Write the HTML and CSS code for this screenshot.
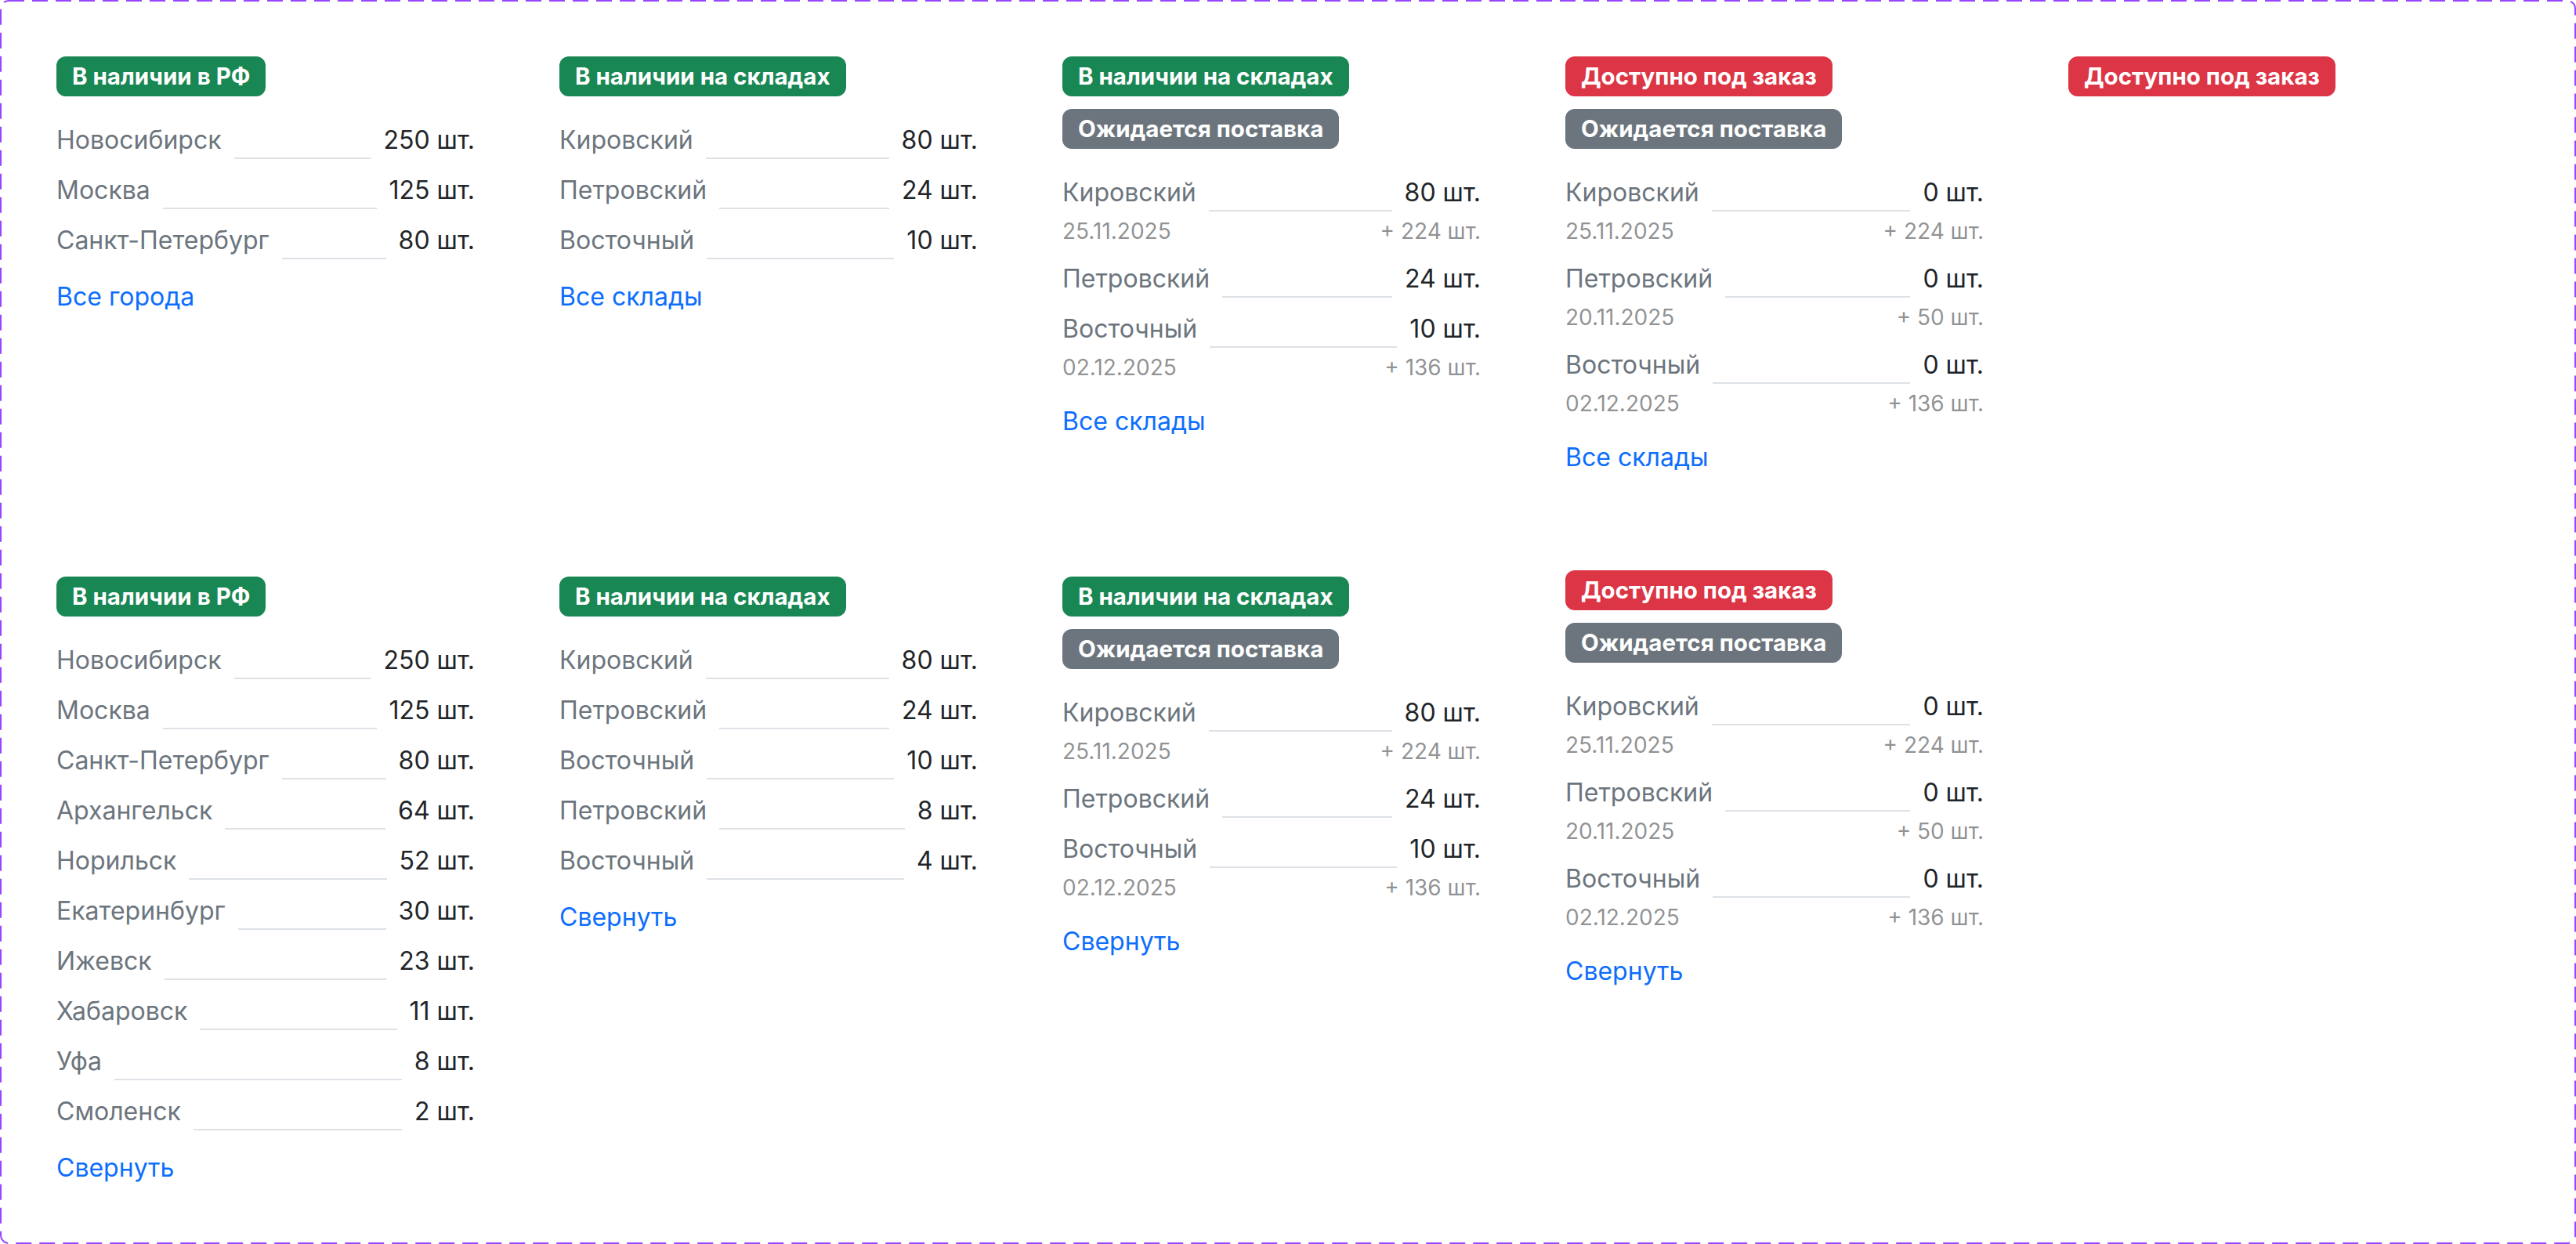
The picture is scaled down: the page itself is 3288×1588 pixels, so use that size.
FILE: index.html
```html
<!DOCTYPE html>
<html lang="ru">
<head>
<meta charset="utf-8">
<title>Наличие товара</title>
<link rel="stylesheet" href="styles.css">
</head>
<body>
<div class="panel">
  <svg class="panel-frame" width="3288" height="1588" viewBox="0 0 3288 1588" aria-hidden="true">
    <rect x="1" y="1" width="3286" height="1586" rx="10" ry="10" fill="none" stroke="#9747FF" stroke-width="2" stroke-dasharray="20 10"/>
  </svg>

  <section class="stock-grid">
    <div class="stock">
      <div class="badges"><span class="badge badge-green">В наличии в РФ</span></div>
      <div class="list">
        <div class="row"><span class="name">Новосибирск</span><span class="fill"></span><span class="qty">250 шт.</span></div>
        <div class="row"><span class="name">Москва</span><span class="fill"></span><span class="qty">125 шт.</span></div>
        <div class="row"><span class="name">Санкт-Петербург</span><span class="fill"></span><span class="qty">80 шт.</span></div>
      </div>
      <a class="link" href="#">Все города</a>
    </div>

    <div class="stock">
      <div class="badges"><span class="badge badge-green">В наличии на складах</span></div>
      <div class="list">
        <div class="row"><span class="name">Кировский</span><span class="fill"></span><span class="qty">80 шт.</span></div>
        <div class="row"><span class="name">Петровский</span><span class="fill"></span><span class="qty">24 шт.</span></div>
        <div class="row"><span class="name">Восточный</span><span class="fill"></span><span class="qty">10 шт.</span></div>
      </div>
      <a class="link" href="#">Все склады</a>
    </div>

    <div class="stock">
      <div class="badges">
        <span class="badge badge-green">В наличии на складах</span>
        <span class="badge badge-grey">Ожидается поставка</span>
      </div>
      <div class="list">
        <div class="item">
          <div class="row"><span class="name">Кировский</span><span class="fill"></span><span class="qty">80 шт.</span></div>
          <div class="sub"><span>25.11.2025</span><span>+ 224 шт.</span></div>
        </div>
        <div class="item">
          <div class="row"><span class="name">Петровский</span><span class="fill"></span><span class="qty">24 шт.</span></div>
        </div>
        <div class="item">
          <div class="row"><span class="name">Восточный</span><span class="fill"></span><span class="qty">10 шт.</span></div>
          <div class="sub"><span>02.12.2025</span><span>+ 136 шт.</span></div>
        </div>
      </div>
      <a class="link" href="#">Все склады</a>
    </div>

    <div class="stock">
      <div class="badges">
        <span class="badge badge-red">Доступно под заказ</span>
        <span class="badge badge-grey">Ожидается поставка</span>
      </div>
      <div class="list">
        <div class="item">
          <div class="row"><span class="name">Кировский</span><span class="fill"></span><span class="qty">0 шт.</span></div>
          <div class="sub"><span>25.11.2025</span><span>+ 224 шт.</span></div>
        </div>
        <div class="item">
          <div class="row"><span class="name">Петровский</span><span class="fill"></span><span class="qty">0 шт.</span></div>
          <div class="sub"><span>20.11.2025</span><span>+ 50 шт.</span></div>
        </div>
        <div class="item">
          <div class="row"><span class="name">Восточный</span><span class="fill"></span><span class="qty">0 шт.</span></div>
          <div class="sub"><span>02.12.2025</span><span>+ 136 шт.</span></div>
        </div>
      </div>
      <a class="link" href="#">Все склады</a>
    </div>

    <div class="stock">
      <div class="badges"><span class="badge badge-red">Доступно под заказ</span></div>
    </div>
  </section>

  <section class="stock-grid">
    <div class="stock">
      <div class="badges"><span class="badge badge-green">В наличии в РФ</span></div>
      <div class="list">
        <div class="row"><span class="name">Новосибирск</span><span class="fill"></span><span class="qty">250 шт.</span></div>
        <div class="row"><span class="name">Москва</span><span class="fill"></span><span class="qty">125 шт.</span></div>
        <div class="row"><span class="name">Санкт-Петербург</span><span class="fill"></span><span class="qty">80 шт.</span></div>
        <div class="row"><span class="name">Архангельск</span><span class="fill"></span><span class="qty">64 шт.</span></div>
        <div class="row"><span class="name">Норильск</span><span class="fill"></span><span class="qty">52 шт.</span></div>
        <div class="row"><span class="name">Екатеринбург</span><span class="fill"></span><span class="qty">30 шт.</span></div>
        <div class="row"><span class="name">Ижевск</span><span class="fill"></span><span class="qty">23 шт.</span></div>
        <div class="row"><span class="name">Хабаровск</span><span class="fill"></span><span class="qty">11 шт.</span></div>
        <div class="row"><span class="name">Уфа</span><span class="fill"></span><span class="qty">8 шт.</span></div>
        <div class="row"><span class="name">Смоленск</span><span class="fill"></span><span class="qty">2 шт.</span></div>
      </div>
      <a class="link" href="#">Свернуть</a>
    </div>

    <div class="stock">
      <div class="badges"><span class="badge badge-green">В наличии на складах</span></div>
      <div class="list">
        <div class="row"><span class="name">Кировский</span><span class="fill"></span><span class="qty">80 шт.</span></div>
        <div class="row"><span class="name">Петровский</span><span class="fill"></span><span class="qty">24 шт.</span></div>
        <div class="row"><span class="name">Восточный</span><span class="fill"></span><span class="qty">10 шт.</span></div>
        <div class="row"><span class="name">Петровский</span><span class="fill"></span><span class="qty">8 шт.</span></div>
        <div class="row"><span class="name">Восточный</span><span class="fill"></span><span class="qty">4 шт.</span></div>
      </div>
      <a class="link" href="#">Свернуть</a>
    </div>

    <div class="stock">
      <div class="badges">
        <span class="badge badge-green">В наличии на складах</span>
        <span class="badge badge-grey">Ожидается поставка</span>
      </div>
      <div class="list">
        <div class="item">
          <div class="row"><span class="name">Кировский</span><span class="fill"></span><span class="qty">80 шт.</span></div>
          <div class="sub"><span>25.11.2025</span><span>+ 224 шт.</span></div>
        </div>
        <div class="item">
          <div class="row"><span class="name">Петровский</span><span class="fill"></span><span class="qty">24 шт.</span></div>
        </div>
        <div class="item">
          <div class="row"><span class="name">Восточный</span><span class="fill"></span><span class="qty">10 шт.</span></div>
          <div class="sub"><span>02.12.2025</span><span>+ 136 шт.</span></div>
        </div>
      </div>
      <a class="link" href="#">Свернуть</a>
    </div>

    <div class="stock stock-raised">
      <div class="badges">
        <span class="badge badge-red">Доступно под заказ</span>
        <span class="badge badge-grey">Ожидается поставка</span>
      </div>
      <div class="list">
        <div class="item">
          <div class="row"><span class="name">Кировский</span><span class="fill"></span><span class="qty">0 шт.</span></div>
          <div class="sub"><span>25.11.2025</span><span>+ 224 шт.</span></div>
        </div>
        <div class="item">
          <div class="row"><span class="name">Петровский</span><span class="fill"></span><span class="qty">0 шт.</span></div>
          <div class="sub"><span>20.11.2025</span><span>+ 50 шт.</span></div>
        </div>
        <div class="item">
          <div class="row"><span class="name">Восточный</span><span class="fill"></span><span class="qty">0 шт.</span></div>
          <div class="sub"><span>02.12.2025</span><span>+ 136 шт.</span></div>
        </div>
      </div>
      <a class="link" href="#">Свернуть</a>
    </div>
  </section>
</div>
</body>
</html>
```

FILE: styles.css
```css
* {
  box-sizing: border-box;
}

html,
body {
  margin: 0;
  padding: 0;
  background: #ffffff;
}

body {
  font-family: Inter, "Noto Sans", "Liberation Sans", sans-serif;
  color: #212529;
  -webkit-font-smoothing: antialiased;
}

.panel {
  position: relative;
  width: 3288px;
  height: 1588px;
  padding: 72px;
  border-radius: 10px;
  display: flex;
  flex-direction: column;
  gap: 128px;
}

.panel-frame {
  position: absolute;
  inset: 0;
  pointer-events: none;
}

.stock-grid {
  display: grid;
  grid-template-columns: repeat(5, 534px);
  column-gap: 108px;
  align-items: start;
}

.stock {
  display: flex;
  flex-direction: column;
  align-items: stretch;
}

.stock-raised {
  margin-top: -8px;
}

.badges {
  display: flex;
  flex-direction: column;
  align-items: flex-start;
  gap: 16px;
}

.badge {
  display: inline-block;
  font-size: 29.5px;
  line-height: 35px;
  font-weight: 700;
  color: #ffffff;
  padding: 8px 20px;
  border-radius: 12px;
  white-space: nowrap;
}

.badge-green {
  background: #198754;
}

.badge-red {
  background: #dc3545;
}

.badge-grey {
  background: #6c757d;
}

.list {
  margin-top: 32px;
  display: flex;
  flex-direction: column;
  gap: 16px;
}

.item {
  display: flex;
  flex-direction: column;
}

.row {
  display: flex;
  align-items: stretch;
  gap: 16px;
  font-size: 32px;
  line-height: 48px;
}

.name {
  color: #6c757d;
  white-space: nowrap;
}

.fill {
  flex: 1 1 auto;
  border-bottom: 2px solid #dee2e6;
}

.qty {
  color: #212529;
  white-space: nowrap;
}

.sub {
  display: flex;
  justify-content: space-between;
  margin-top: 4px;
  font-size: 28px;
  line-height: 42px;
  color: rgba(33, 37, 41, 0.5);
}

.link {
  align-self: flex-start;
  margin-top: 24px;
  font-size: 32px;
  line-height: 48px;
  color: #0d6efd;
  text-decoration: none;
}
```
